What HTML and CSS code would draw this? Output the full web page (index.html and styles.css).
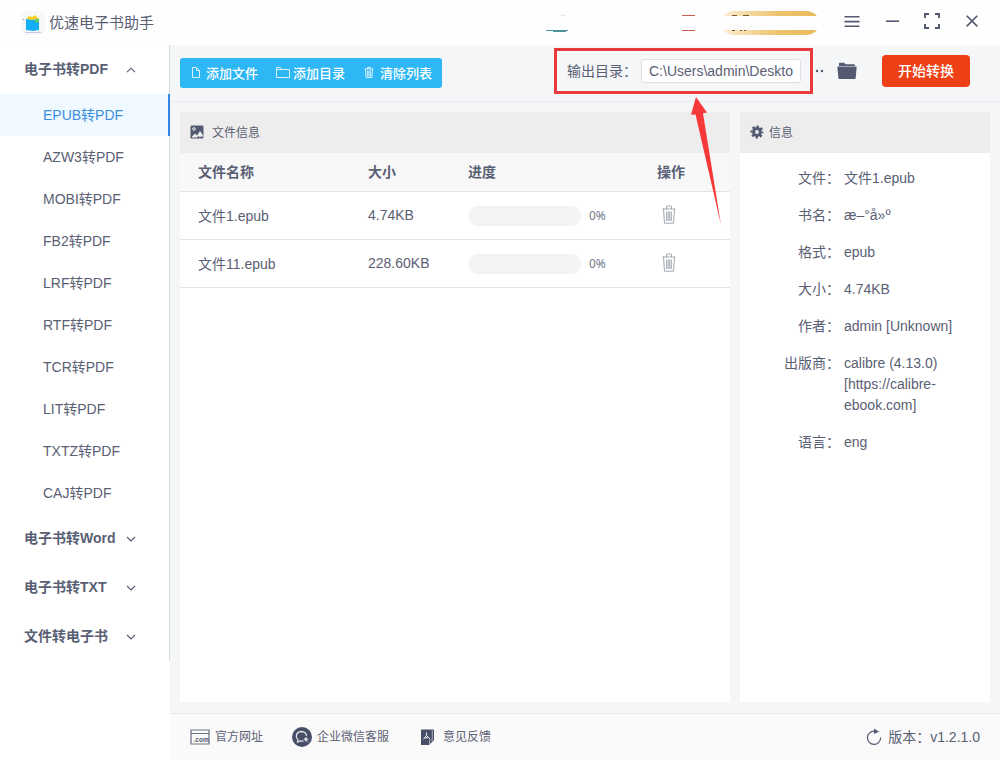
FILE: index.html
```html
<!DOCTYPE html>
<html lang="zh-CN">
<head>
    <meta charset="UTF-8">
    <meta name="viewport" content="width=device-width, initial-scale=1.0">
    <title>优速电子书助手</title>
    <link rel="stylesheet" href="styles.css">
</head>
<body>
    <div class="header">
        <svg class="logo" width="26" height="26" viewBox="0 0 26 26">
            <rect x="1" y="1" width="24" height="24" rx="5" fill="#f8f8fb"/>
            <path d="M7 8l2-2 3 1 3-2 2 2 2 2v3H7z" fill="#ffd02e"/>
            <path d="M6 9l6 1 7-1v11l-6 1-7-1z" fill="#14aef5"/>
            <path d="M14 10l5-1v3l-3 1z" fill="#4fcb6b"/>
            <path d="M5 22.5h16" stroke="#c9c5dc"/>
            <circle cx="3.5" cy="9.5" r=".8" fill="#a9a4c4"/>
        </svg>
        <span class="title">优速电子书助手</span>
        <svg class="badges" width="274" height="26" viewBox="0 0 274 26">
            <defs>
                <linearGradient id="gold">
                    <stop offset="0" stop-color="#fbedd2"/>
                    <stop offset="0.6" stop-color="#edc26c"/>
                    <stop offset="1" stop-color="#e9bb5d"/>
                </linearGradient>
            </defs>
            <path d="M16 5.5h4" stroke="#dce6e8"/>
            <path d="M1 20.5h22M8 21.5h13" stroke="#4f929b"/>
            <path d="M137 5.5h13M137 20.5h13" stroke="#c75f4d"/>
            <path d="M178 6q5-5 12-5h70q8 0 12 5zM178 20q5 5 12 5h70q8 0 12-5z" fill="url(#gold)"/>
            <path d="M187 5.5h5M198 5.5h6M187 20.5h3M195 20.5h2M199 20.5h2" stroke="#7a5a2c"/>
        </svg>
        <div class="windowBtns">
            <svg width="16" height="20" viewBox="0 0 16 20"><path d="M.5 5.8h15M.5 10.6h15M.5 15.2h15"/></svg>
            <svg width="14" height="20" viewBox="0 0 14 20"><path d="M1 10.2h13"/></svg>
            <svg width="16" height="20" viewBox="0 0 16 20"><path d="M1 7V3h4M11 3h4v4M15 13v4h-4M5 17H1v-4" stroke-width="1.9"/></svg>
            <svg width="12" height="20" viewBox="0 0 12 20"><path d="M.7 4.8l10.6 10.6M11.3 4.8L.7 15.4"/></svg>
        </div>
    </div>
    <div class="wrapper">
        <div class="sidebar">
            <div class="menu">
                <div class="group"><span>电子书转PDF</span><svg width="10" height="6" viewBox="0 0 10 6"><path d="M1 5.2L5 1.2l4 4"/></svg></div>
                <div class="item active">EPUB转PDF</div>
                <div class="item">AZW3转PDF</div>
                <div class="item">MOBI转PDF</div>
                <div class="item">FB2转PDF</div>
                <div class="item">LRF转PDF</div>
                <div class="item">RTF转PDF</div>
                <div class="item">TCR转PDF</div>
                <div class="item">LIT转PDF</div>
                <div class="item">TXTZ转PDF</div>
                <div class="item">CAJ转PDF</div>
                <div class="group"><span>电子书转Word</span><svg width="10" height="6" viewBox="0 0 10 6"><path d="M1 1l4 4 4-4"/></svg></div>
                <div class="group"><span>电子书转TXT</span><svg width="10" height="6" viewBox="0 0 10 6"><path d="M1 1l4 4 4-4"/></svg></div>
                <div class="group"><span>文件转电子书</span><svg width="10" height="6" viewBox="0 0 10 6"><path d="M1 1l4 4 4-4"/></svg></div>
            </div>
        </div>
        <div class="main">
            <div class="toolbar">
                <div class="actions">
                    <span class="action">
                        <svg width="10" height="13" viewBox="0 0 10 13"><path d="M1.5 1.5h4l3 3v7h-7zM5.5 1.5v3h3"/></svg>添加文件
                    </span>
                    <span class="action folder">
                        <svg width="14" height="13" viewBox="0 0 14 13"><path d="M.5 1.5h4l1.5 2h7.5v8H.5zM6 3.5h-5"/></svg>添加目录
                    </span>
                    <span class="action trash">
                        <svg width="10" height="13" viewBox="0 0 10 13"><path d="M.5 3h9M3.5 3V1.5h3V3M1.5 3l.6 8.5h5.8L8.5 3M3.7 4.5v6M5 4.5v6M6.3 4.5v6"/></svg>清除列表
                    </span>
                </div>
                <div class="output">
                    <label class="outputLabel">输出目录：</label>
                    <div class="path">C:\Users\admin\Deskto</div>
                </div>
                <svg class="dots" width="12" height="4" viewBox="0 0 12 4"><circle cx="3" cy="2" r="1.2"/><circle cx="8" cy="2" r="1.2"/></svg>
                <svg class="openDir" width="20" height="18" viewBox="0 0 20 18">
                    <path d="M2 3V1.5q0-.7.7-.7h4.5l1.2 1.5h8.8q.7 0 .7.8V4H2z"/>
                    <path d="M.8 4.6h18.4q.5 0 .4.8l-.9 10.7q-.1.9-1 .9H2.4q-.9 0-1-.9L.4 5.4q0-.8.4-.8z"/>
                </svg>
                <button class="start">开始转换</button>
            </div>
            <div class="content">
                <div class="panel files">
                    <div class="panelHead">
                        <svg width="14" height="14" viewBox="0 0 14 14">
                            <rect x=".5" y=".5" width="13" height="13" rx="1.2" fill="#525970"/>
                            <path d="M2 12.5v-1l3-3 2 2 3-4.5 2.8 4v2.5l-1.3-1.5-1.5 1.5-1.5-1.5-1.5 1.5z" fill="#ededed"/>
                            <circle cx="4" cy="4" r="1.3" fill="none" stroke="#ededed"/>
                        </svg>
                        <span>文件信息</span>
                    </div>
                    <div class="row rowHead">
                        <span>文件名称</span><span>大小</span><span>进度</span><span class="op">操作</span>
                    </div>
                    <div class="row">
                        <span>文件1.epub</span>
                        <span>4.74KB</span>
                        <span class="progress"><i class="bar"></i>0%</span>
                        <span class="op"><svg width="14" height="20" viewBox="0 0 14 20"><path d="M.5 4h13M4.5 4V1.5q0-.5.5-.5h4q.5 0 .5.5V4M1.5 4l1 14.2h9L12.5 4M4.7 6.5v9.5M6.2 6.5v9.5M7.8 6.5v9.5M9.3 6.5v9.5"/></svg></span>
                    </div>
                    <div class="row">
                        <span>文件11.epub</span>
                        <span>228.60KB</span>
                        <span class="progress"><i class="bar"></i>0%</span>
                        <span class="op"><svg width="14" height="20" viewBox="0 0 14 20"><path d="M.5 4h13M4.5 4V1.5q0-.5.5-.5h4q.5 0 .5.5V4M1.5 4l1 14.2h9L12.5 4M4.7 6.5v9.5M6.2 6.5v9.5M7.8 6.5v9.5M9.3 6.5v9.5"/></svg></span>
                    </div>
                </div>
                <div class="panel info">
                    <div class="panelHead">
                        <svg width="14" height="14" viewBox="0 0 14 14">
                            <circle cx="7" cy="7" r="3.4" fill="none" stroke="#525970" stroke-width="3"/>
                            <circle cx="7" cy="7" r="5.4" fill="none" stroke="#525970" stroke-width="2.4" stroke-dasharray="2.3 1.94" stroke-dashoffset="1.15"/>
                        </svg>
                        <span>信息</span>
                    </div>
                    <dl class="details">
                        <dt>文件：</dt><dd>文件1.epub</dd>
                        <dt>书名：</dt><dd>æ–°å»º</dd>
                        <dt>格式：</dt><dd>epub</dd>
                        <dt>大小：</dt><dd>4.74KB</dd>
                        <dt>作者：</dt><dd>admin [Unknown]</dd>
                        <dt>出版商：</dt><dd>calibre (4.13.0) [https://calibre-ebook.com]</dd>
                        <dt>语言：</dt><dd>eng</dd>
                    </dl>
                </div>
            </div>
            <div class="footer">
                <span class="link">
                    <svg width="20" height="16" viewBox="0 0 20 16">
                        <path d="M1 1h18v14H1zM1 4.5h18" fill="none" stroke="#6a7084" stroke-width="1.2"/>
                        <text x="3.5" y="12.6" class="com">.com</text>
                    </svg><span>官方网址</span>
                </span>
                <span class="link wechat">
                    <svg width="20" height="20" viewBox="0 0 20 20">
                        <circle cx="10" cy="10" r="10" fill="#474f68"/>
                        <path d="M11.5 13.8q-1.5.4-3 .1l-3 1.1.6-2.2Q4.3 11.3 4.3 9.2q.3-4.4 5-4.7 4.9.3 5.2 4.5" fill="none" stroke="#dfe3ea" stroke-width="1.3"/>
                        <path d="M14 10.2l.7 1.3 1.5.8-1.5.8-.7 1.4-.8-1.4-1.4-.8 1.4-.8zM15 14l1.5 1.3" fill="#dfe3ea" stroke="#dfe3ea" stroke-width=".6"/>
                    </svg><span>企业微信客服</span>
                </span>
                <span class="link feedback">
                    <svg width="15" height="18" viewBox="0 0 15 18">
                        <path d="M1 1.5h13V12l-5 5H1z" fill="#474f68"/>
                        <path d="M12.3 2v10H9.5v4.5" fill="none" stroke="#c3c7d0" stroke-width=".8"/>
                        <path d="M6.5 4.5v3l-3 3.8M6.5 7.5L10 11M4.5 9.8h4" fill="none" stroke="#eef0f4"/>
                    </svg><span>意见反馈</span>
                </span>
                <span class="version">
                    <svg width="16" height="18" viewBox="0 0 16 18">
                        <path d="M8.5 3.2A6.6 6.6 0 1 0 14.6 9.5" fill="none" stroke="#525970" stroke-width="1.2"/>
                        <path d="M8 .5l5 3.2-5 2.3z" fill="#525970"/>
                    </svg><span>版本：v1.2.1.0</span>
                </span>
            </div>
        </div>
    </div>
    <!-- callout over the output folder -->
    <div class="highlight"></div>
    <svg class="arrow" width="32" height="130" viewBox="0 0 32 130"><path d="M6 1l11 15.5-4 .8L31 129 5.5 18.5l-4.500.3z"/></svg>
</body>
</html>
```
FILE: styles.css
```css
body{
    margin: 0;
    height: 760px;
    overflow: hidden;
    position: relative;
    background: #fff;
    color: #5a6074;
    font-family: "Liberation Sans", "Noto Sans CJK SC", sans-serif;
    font-size: 14px;
}
svg{
    display: block;
    flex: none;
}
.header{
    height: 45px;
    box-sizing: border-box;
    display: flex;
    align-items: center;
    padding: 0 22px 0 20px;
    background: #fefefe;
}
.title{
    margin-left: 3px;
    padding-bottom: 2px;
    font-size: 15px;
}
.badges{
    margin-left: auto;
}
.windowBtns{
    display: flex;
    align-items: center;
    margin-left: 25px;
    margin-top: -3px;
}
.windowBtns svg{
    fill: none;
    stroke: #525970;
    stroke-width: 1.6;
}
.windowBtns svg:nth-child(2){
    margin-left: 25px;
}
.windowBtns svg:nth-child(3){
    margin-left: 25px;
}
.windowBtns svg:nth-child(4){
    margin-left: 26px;
}
.wrapper{
    height: 715px;
    display: flex;
}
.sidebar{
    width: 170px;
    flex: none;
}
.menu{
    border-right: 1px solid #d5dadd;
}
.group{
    height: 49px;
    display: flex;
    align-items: center;
    justify-content: space-between;
    padding: 0 33px 0 24px;
    font-weight: bold;
}
.group span{
    padding-bottom: 3px;
}
.group svg{
    fill: none;
    stroke: #525970;
    stroke-width: 1.1;
}
.item{
    height: 42px;
    line-height: 42px;
    padding-left: 43px;
}
.active{
    color: #3a8ee0;
    background: #f0f9ff;
    border-right: 2px solid #2e86e5;
    margin-right: -1px;
}
.main{
    flex: 1;
    min-width: 0;
    display: flex;
    flex-direction: column;
    background: #f5f6f8;
}
.toolbar{
    height: 57px;
    box-sizing: border-box;
    display: flex;
    align-items: center;
    padding: 0 30px 4px 10px;
    border-bottom: 1px solid #e9ebee;
}
.actions{
    width: 262px;
    height: 30px;
    box-sizing: border-box;
    display: flex;
    align-items: center;
    padding: 0 0 2px 11px;
    margin-top: 4px;
    border-radius: 3px;
    background: #2db7f5;
    color: #fff;
    font-size: 13px;
    font-weight: 500;
}
.action{
    display: flex;
    align-items: center;
    gap: 5px;
}
.action svg{
    fill: none;
    stroke: #d9f2fd;
}
.folder{
    margin-left: 18px;
    gap: 3px;
}
.trash{
    margin-left: 19px;
    gap: 6px;
}
.output{
    display: flex;
    align-items: center;
    margin-left: 125px;
}
.outputLabel{
    width: 74px;
    padding-bottom: 3px;
}
.path{
    width: 160px;
    height: 24px;
    box-sizing: border-box;
    padding-left: 7px;
    line-height: 23px;
    border: 1px solid #dcdee2;
    border-radius: 3px;
    background: #fff;
    white-space: nowrap;
}
.dots{
    fill: #525970;
    margin-left: 13px;
}
.openDir{
    fill: #525970;
    margin-left: 11px;
}
.start{
    width: 88px;
    height: 32px;
    margin-left: auto;
    padding: 0 0 2px;
    border: 0;
    border-radius: 4px;
    background: #ee3f16;
    color: #fff;
    font: 500 14px "Liberation Sans", "Noto Sans CJK SC", sans-serif;
}
.content{
    flex: 1;
    display: flex;
    gap: 10px;
    padding: 10px 10px 11px;
}
.panel{
    background: #fff;
}
.files{
    width: 550px;
}
.info{
    width: 250px;
}
.panelHead{
    height: 41px;
    box-sizing: border-box;
    display: flex;
    align-items: center;
    gap: 8px;
    padding: 0 0 2px 10px;
    background: #ededed;
    font-size: 12px;
}
.info .panelHead{
    gap: 5px;
}
.row{
    height: 48px;
    box-sizing: border-box;
    display: grid;
    grid-template-columns: 170px 100px 171px 60px;
    align-items: center;
    padding-left: 18px;
    padding-bottom: 1px;
    border-bottom: 1px solid #e1e3e6;
}
.rowHead{
    height: 39px;
    padding-bottom: 2px;
    background: #f8f8f9;
    font-weight: bold;
}
.op{
    display: flex;
    justify-content: center;
}
.rowHead .op{
    padding-left: 4px;
}
.op svg{
    fill: none;
    stroke: #8b90a0;
    stroke-width: .8;
}
.progress{
    display: flex;
    align-items: center;
    gap: 8px;
    color: #73788a;
    font-family: "Noto Sans", sans-serif;
    font-size: 12px;
}
.bar{
    width: 113px;
    height: 20px;
    margin-top: 2px;
    border-radius: 10px;
    background: #f3f3f3;
}
.details{
    display: grid;
    grid-template-columns: 100px 130px;
    column-gap: 4px;
    row-gap: 16px;
    margin: 15px 0 0;
    line-height: 21px;
}
.details dt{
    text-align: right;
    white-space: nowrap;
}
.details dd{
    margin: 0;
}
.footer{
    height: 47px;
    box-sizing: border-box;
    display: flex;
    align-items: center;
    padding: 0 20px;
    border-top: 1px solid #e8eaec;
    background: #fafafa;
    font-size: 12px;
}
.link{
    display: flex;
    align-items: center;
    gap: 5px;
}
.link span, .version span{
    padding-bottom: 3px;
}
.com{
    font: bold 6.5px "Liberation Sans", sans-serif;
    fill: #525970;
}
.wechat{
    margin-left: 29px;
}
.feedback{
    margin-left: 31px;
    gap: 8px;
}
.version{
    display: flex;
    align-items: center;
    gap: 6px;
    margin-left: auto;
    font-size: 14px;
}
.highlight{
    position: absolute;
    left: 554px;
    top: 48px;
    width: 259px;
    height: 46px;
    box-sizing: border-box;
    border: 3px solid #e93b3d;
}
.arrow{
    position: absolute;
    left: 690px;
    top: 96px;
    fill: #f8393a;
}
```
